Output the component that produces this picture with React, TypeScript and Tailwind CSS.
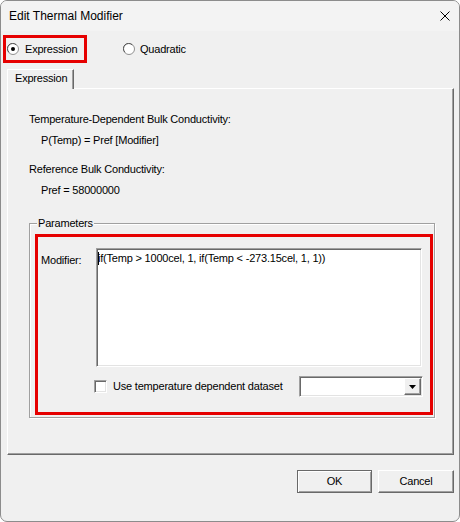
import React from "react";

const Radio = ({ checked }: { checked?: boolean }) => (
    <svg width="12" height="12" viewBox="0 0 12 12" className="shrink-0">
        <circle cx="6" cy="6" r="5.5" fill="#ffffff" stroke="#8f8f8f" />
        <path d="M1.9 9.2A5 5 0 0 1 9.2 1.9" fill="none" stroke="#5a5a5a" strokeWidth="1" />
        {checked && <circle cx="6" cy="6" r="2" fill="#000000" />}
    </svg>
);

const raised =
    "border border-t-white border-l-white border-r-[#696969] border-b-[#696969] shadow-[inset_-1px_-1px_0_#a0a0a0] bg-[#f0f0f0]";
const sunken =
    "border border-t-[#a0a0a0] border-l-[#a0a0a0] border-r-white border-b-white shadow-[inset_1px_1px_0_#696969,inset_-1px_-1px_0_#e3e3e3] bg-white";

const App = () => {
    return (
        <div className="w-[460px] h-[522px] bg-[#f0f0f0] border border-[#8c8c8c] rounded-[7px] overflow-hidden flex flex-col font-['Liberation_Sans',Arial,sans-serif] text-[11px] leading-[13px] tracking-[-0.2px] text-black">
            {/* title bar */}
            <div className="h-[30px] shrink-0 bg-[#f3f3f3] flex items-center justify-between pl-[8px] pr-[9px]">
                <span className="text-[12px] leading-[14px] tracking-normal">Edit Thermal Modifier</span>
                <svg width="10" height="10" viewBox="0 0 10 10">
                    <path d="M0.5 0.5L9.5 9.5M9.5 0.5L0.5 9.5" stroke="#000" strokeWidth="1" />
                </svg>
            </div>

            <div className="flex flex-col items-start">
                {/* mode radios */}
                <div className="flex items-center mt-[4px] ml-[2px]">
                    <div className="w-[84px] h-[28px] border-[3px] border-[#e60000] flex items-center pl-[1px] gap-[6px]">
                        <Radio checked />
                        <span>Expression</span>
                    </div>
                    <div className="ml-[36px] flex items-center gap-[5px]">
                        <Radio />
                        <span>Quadratic</span>
                    </div>
                </div>

                {/* tab */}
                <div className="mt-[6px] ml-[6px] flex flex-col items-start">
                    <div className="relative z-10 -mb-px w-[67px] h-[20px] bg-[#f0f0f0] border-t border-l border-white border-r border-r-[#696969] shadow-[inset_-1px_0_0_#a0a0a0] pl-[7px] pt-[2px]">
                        Expression
                    </div>
                    <div className="w-[447px] h-[367px] border-t border-l border-white border-r border-b border-r-[#696969] border-b-[#696969] shadow-[inset_-1px_-1px_0_#a0a0a0] pl-[21px] pt-[24px] flex flex-col items-start">
                        <div>Temperature-Dependent Bulk Conductivity:</div>
                        <div className="mt-[8px] pl-[12px]">P(Temp) = Pref [Modifier]</div>
                        <div className="mt-[16px]">Reference Bulk Conductivity:</div>
                        <div className="mt-[8px] pl-[12px]">Pref = 58000000</div>

                        {/* parameters group */}
                        <div className="relative z-10 mt-[20px] -mb-[7px] ml-[8px] px-[1px] bg-[#f0f0f0]">Parameters</div>
                        <div className="w-[406px] h-[195px] border border-[#a0a0a0] shadow-[1px_1px_0_#ffffff,inset_1px_1px_0_#ffffff] flex flex-col items-start">
                            <div className="mt-[10px] ml-[5px] w-[398px] h-[181px] border-[3px] border-[#e60000] flex flex-col">
                                <div className="flex items-start mt-[11px] pl-[3px]">
                                    <div className="w-[55px] mt-[6px]">Modifier:</div>
                                    <div className={`w-[326px] h-[119px] ${sunken} pl-[1px] pt-[3px] whitespace-nowrap overflow-hidden`}>
                                        <span className="inline-block w-px h-[13px] bg-black align-top" />
                                        <span className="-ml-px">if(Temp &gt; 1000cel, 1, if(Temp &lt; -273.15cel, 1, 1))</span>
                                    </div>
                                </div>
                                <div className="flex items-center mt-[9px] pr-[7px]">
                                    <div className={`ml-[56px] w-[13px] h-[13px] ${sunken}`} />
                                    <span className="ml-[6px]">Use temperature dependent dataset</span>
                                    <div className={`ml-auto w-[124px] h-[21px] ${sunken} p-px flex justify-end`}>
                                        <div className={`w-[17px] h-full ${raised} flex items-center justify-center`}>
                                            <svg width="7" height="4" viewBox="0 0 7 4">
                                                <path d="M0 0H7L3.5 4Z" fill="#000" />
                                            </svg>
                                        </div>
                                    </div>
                                </div>
                            </div>
                        </div>
                    </div>
                </div>

                {/* dialog buttons */}
                <div className="self-stretch flex justify-end gap-[6px] mt-[15px] pr-[5px]">
                    <button className="w-[75px] h-[23px] border border-[#696969] shadow-[inset_1px_1px_0_#ffffff,inset_-1px_-1px_0_#a0a0a0] bg-[#f0f0f0] text-[11px] leading-[13px]">
                        OK
                    </button>
                    <button className={`w-[76px] h-[23px] ${raised} text-[11px] leading-[13px]`}>Cancel</button>
                </div>
            </div>
        </div>
    );
};

export default App;
